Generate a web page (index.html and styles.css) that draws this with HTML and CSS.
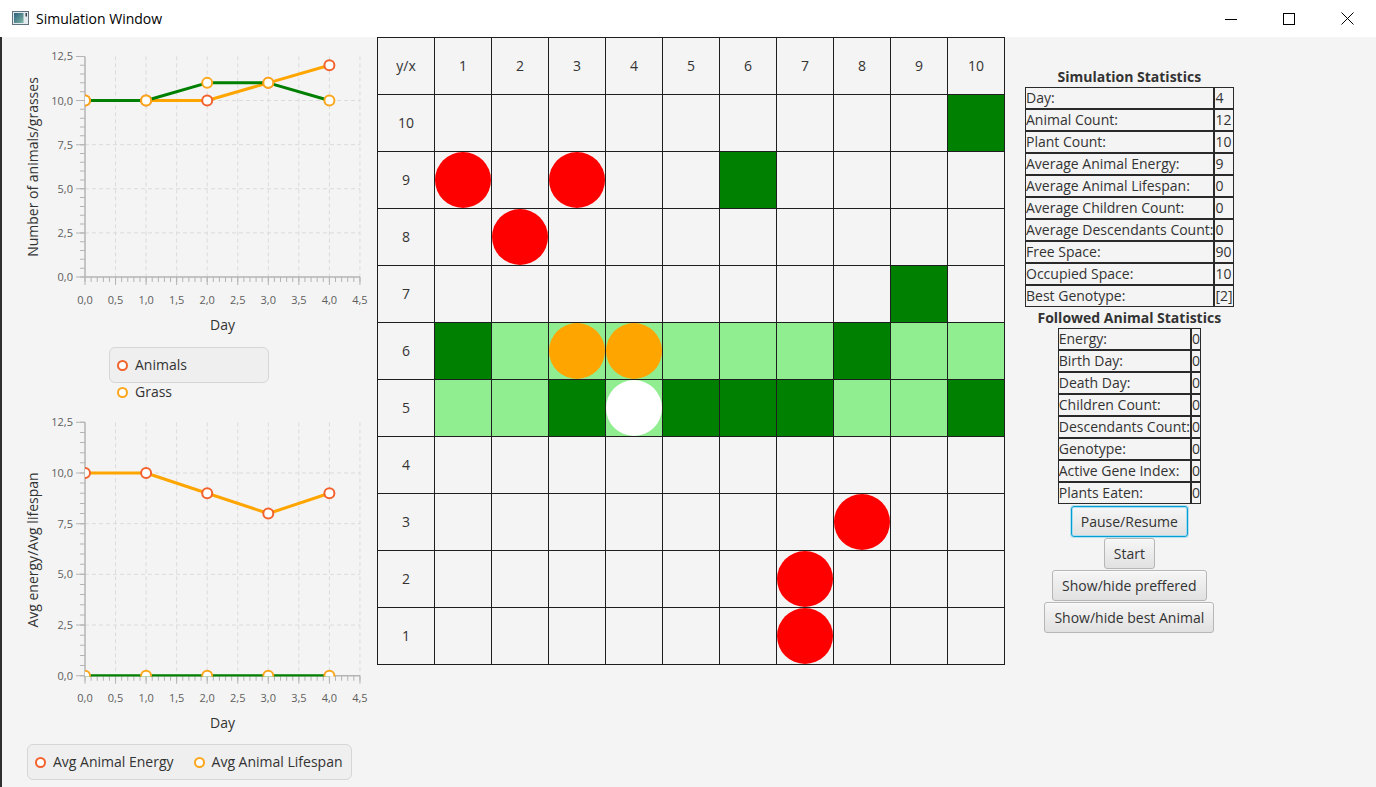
FILE: index.html
```html
<!DOCTYPE html>
<html lang="en">
<head>
<meta charset="utf-8">
<title>Simulation Window</title>
<link rel="stylesheet" href="styles.css">
</head>
<body>
<div class="window">
  <header class="titlebar">
    <svg class="app-icon" width="17" height="15" viewBox="0 0 17 15">
      <defs>
        <linearGradient id="ig" x1="0" x2="1" y1="0" y2="1">
          <stop offset="0" stop-color="#2c5f7c"/>
          <stop offset="1" stop-color="#7fb8a8"/>
        </linearGradient>
      </defs>
      <rect x="0.5" y="0.5" width="16" height="13" fill="#e4eaee" stroke="#60727c"/>
      <rect x="2" y="2" width="9.5" height="10" fill="url(#ig)"/>
      <rect x="13.5" y="2" width="1.5" height="3.5" fill="#34444c"/>
    </svg>
    <span class="title">Simulation Window</span>
    <div class="controls">
      <span class="ctl"><svg width="12" height="12" viewBox="0 0 12 12"><path d="M0 6.5h12" stroke="#000" stroke-width="1"/></svg></span>
      <span class="ctl"><svg width="12" height="12" viewBox="0 0 12 12"><rect x="0.5" y="0.5" width="11" height="11" fill="none" stroke="#000" stroke-width="1"/></svg></span>
      <span class="ctl"><svg width="13" height="13" viewBox="0 0 13 13"><path d="M0.5 0.5L12.5 12.5M12.5 0.5L0.5 12.5" stroke="#000" stroke-width="1"/></svg></span>
    </div>
  </header>

  <main class="content">
    <section class="charts">
      <div class="chart-block">
        <svg class="chart" width="377" height="303" viewBox="0 0 377 303">
          <defs>
            <clipPath id="clipA"><rect x="85" y="19.4" width="275" height="222"/></clipPath>
          </defs>
          <g class="grid-lines">
            <path d="M115.55 19.4V240M146.1 19.4V240M176.65 19.4V240M207.2 19.4V240M237.75 19.4V240M268.3 19.4V240M298.85 19.4V240M329.4 19.4V240M359.95 19.4V240"/>
            <path d="M85 195.88H360M85 151.76H360M85 107.64H360M85 63.52H360"/>
          </g>
          <g class="axis">
            <path class="axis-line" d="M85 19.4V240H360"/>
            <line class="tick" x1="80.5" y1="18.9" x2="80.5" y2="240.5" stroke-width="9" stroke-dasharray="1 43.12"/>
            <line class="tick" x1="82.5" y1="18.9" x2="82.5" y2="240.5" stroke-width="5" stroke-dasharray="1 7.824"/>
            <line class="tick" x1="84.5" y1="244" x2="360.5" y2="244" stroke-width="8" stroke-dasharray="1 29.55"/>
            <line class="tick" x1="84.5" y1="242.5" x2="360.5" y2="242.5" stroke-width="5" stroke-dasharray="1 5.11"/>
          </g>
          <g class="tick-labels ylab">
            <text x="73" y="23.4">12,5</text>
            <text x="73" y="67.5">10,0</text>
            <text x="73" y="111.6">7,5</text>
            <text x="73" y="155.8">5,0</text>
            <text x="73" y="199.9">2,5</text>
            <text x="73" y="244">0,0</text>
          </g>
          <g class="tick-labels xlab">
            <text x="85" y="267">0,0</text>
            <text x="115.55" y="267">0,5</text>
            <text x="146.1" y="267">1,0</text>
            <text x="176.65" y="267">1,5</text>
            <text x="207.2" y="267">2,0</text>
            <text x="237.75" y="267">2,5</text>
            <text x="268.3" y="267">3,0</text>
            <text x="298.85" y="267">3,5</text>
            <text x="329.4" y="267">4,0</text>
            <text x="359.95" y="267">4,5</text>
          </g>
          <text class="axis-title" x="222.5" y="292.5">Day</text>
          <text class="axis-title" transform="translate(38 130) rotate(-90)">Number of animals/grasses</text>
          <g clip-path="url(#clipA)">
            <polyline class="series orange" points="85,63.52 146.1,63.52 207.2,63.52 268.3,45.87 329.4,28.22"/>
            <polyline class="series green" points="85,63.52 146.1,63.52 207.2,45.87 268.3,45.87 329.4,63.52"/>
            <g class="marker m0">
              <circle cx="85" cy="63.52" r="5"/><circle cx="146.1" cy="63.52" r="5"/><circle cx="207.2" cy="63.52" r="5"/><circle cx="268.3" cy="45.87" r="5"/><circle cx="329.4" cy="28.22" r="5"/>
            </g>
            <g class="marker m1">
              <circle cx="85" cy="63.52" r="5"/><circle cx="146.1" cy="63.52" r="5"/><circle cx="207.2" cy="45.87" r="5"/><circle cx="268.3" cy="45.87" r="5"/><circle cx="329.4" cy="63.52" r="5"/>
            </g>
          </g>
        </svg>
        <div class="legend legend-v">
          <div class="li"><span class="sym s0"></span>Animals</div>
          <div class="li"><span class="sym s1"></span>Grass</div>
        </div>
      </div>

      <div class="chart-block second">
        <svg class="chart" width="377" height="339" viewBox="0 0 377 339">
          <defs>
            <clipPath id="clipB"><rect x="85" y="17.3" width="275" height="254.3"/></clipPath>
          </defs>
          <g class="grid-lines">
            <path d="M115.55 17.3V270.7M146.1 17.3V270.7M176.65 17.3V270.7M207.2 17.3V270.7M237.75 17.3V270.7M268.3 17.3V270.7M298.85 17.3V270.7M329.4 17.3V270.7M359.95 17.3V270.7"/>
            <path d="M85 220.02H360M85 169.34H360M85 118.66H360M85 67.98H360"/>
          </g>
          <g class="axis">
            <path class="axis-line" d="M85 17.3V270.7H360"/>
            <line class="tick" x1="80.5" y1="16.8" x2="80.5" y2="271.2" stroke-width="9" stroke-dasharray="1 49.68"/>
            <line class="tick" x1="82.5" y1="16.8" x2="82.5" y2="271.2" stroke-width="5" stroke-dasharray="1 9.136"/>
            <line class="tick" x1="84.5" y1="274.7" x2="360.5" y2="274.7" stroke-width="8" stroke-dasharray="1 29.55"/>
            <line class="tick" x1="84.5" y1="273.2" x2="360.5" y2="273.2" stroke-width="5" stroke-dasharray="1 5.11"/>
          </g>
          <g class="tick-labels ylab">
            <text x="73" y="21.3">12,5</text>
            <text x="73" y="72">10,0</text>
            <text x="73" y="122.7">7,5</text>
            <text x="73" y="173.3">5,0</text>
            <text x="73" y="224">2,5</text>
            <text x="73" y="274.7">0,0</text>
          </g>
          <g class="tick-labels xlab">
            <text x="85" y="297">0,0</text>
            <text x="115.55" y="297">0,5</text>
            <text x="146.1" y="297">1,0</text>
            <text x="176.65" y="297">1,5</text>
            <text x="207.2" y="297">2,0</text>
            <text x="237.75" y="297">2,5</text>
            <text x="268.3" y="297">3,0</text>
            <text x="298.85" y="297">3,5</text>
            <text x="329.4" y="297">4,0</text>
            <text x="359.95" y="297">4,5</text>
          </g>
          <text class="axis-title" x="222.5" y="323">Day</text>
          <text class="axis-title" transform="translate(38 145) rotate(-90)">Avg energy/Avg lifespan</text>
          <g clip-path="url(#clipB)">
            <polyline class="series orange" points="85,67.98 146.1,67.98 207.2,88.25 268.3,108.52 329.4,88.25"/>
            <polyline class="series green" points="85,270.7 146.1,270.7 207.2,270.7 268.3,270.7 329.4,270.7"/>
            <g class="marker m0">
              <circle cx="85" cy="67.98" r="5"/><circle cx="146.1" cy="67.98" r="5"/><circle cx="207.2" cy="88.25" r="5"/><circle cx="268.3" cy="108.52" r="5"/><circle cx="329.4" cy="88.25" r="5"/>
            </g>
            <g class="marker m1">
              <circle cx="85" cy="270.7" r="5"/><circle cx="146.1" cy="270.7" r="5"/><circle cx="207.2" cy="270.7" r="5"/><circle cx="268.3" cy="270.7" r="5"/><circle cx="329.4" cy="270.7" r="5"/>
            </g>
          </g>
        </svg>
        <div class="legend legend-h">
          <div class="li"><span class="sym s0"></span>Avg Animal Energy</div>
          <div class="li"><span class="sym s1"></span>Avg Animal Lifespan</div>
        </div>
      </div>
    </section>

    <section class="board">
      <div class="cell">y/x</div><div class="cell">1</div><div class="cell">2</div><div class="cell">3</div><div class="cell">4</div><div class="cell">5</div><div class="cell">6</div><div class="cell">7</div><div class="cell">8</div><div class="cell">9</div><div class="cell">10</div>

      <div class="cell">10</div><div class="cell"></div><div class="cell"></div><div class="cell"></div><div class="cell"></div><div class="cell"></div><div class="cell"></div><div class="cell"></div><div class="cell"></div><div class="cell"></div><div class="cell dg"></div>

      <div class="cell">9</div><div class="cell"><span class="dot red"></span></div><div class="cell"></div><div class="cell"><span class="dot red"></span></div><div class="cell"></div><div class="cell"></div><div class="cell dg"></div><div class="cell"></div><div class="cell"></div><div class="cell"></div><div class="cell"></div>

      <div class="cell">8</div><div class="cell"></div><div class="cell"><span class="dot red"></span></div><div class="cell"></div><div class="cell"></div><div class="cell"></div><div class="cell"></div><div class="cell"></div><div class="cell"></div><div class="cell"></div><div class="cell"></div>

      <div class="cell">7</div><div class="cell"></div><div class="cell"></div><div class="cell"></div><div class="cell"></div><div class="cell"></div><div class="cell"></div><div class="cell"></div><div class="cell"></div><div class="cell dg"></div><div class="cell"></div>

      <div class="cell">6</div><div class="cell dg"></div><div class="cell lg"></div><div class="cell lg"><span class="dot orange"></span></div><div class="cell lg"><span class="dot orange"></span></div><div class="cell lg"></div><div class="cell lg"></div><div class="cell lg"></div><div class="cell dg"></div><div class="cell lg"></div><div class="cell lg"></div>

      <div class="cell">5</div><div class="cell lg"></div><div class="cell lg"></div><div class="cell dg"></div><div class="cell lg"><span class="dot white"></span></div><div class="cell dg"></div><div class="cell dg"></div><div class="cell dg"></div><div class="cell lg"></div><div class="cell lg"></div><div class="cell dg"></div>

      <div class="cell">4</div><div class="cell"></div><div class="cell"></div><div class="cell"></div><div class="cell"></div><div class="cell"></div><div class="cell"></div><div class="cell"></div><div class="cell"></div><div class="cell"></div><div class="cell"></div>

      <div class="cell">3</div><div class="cell"></div><div class="cell"></div><div class="cell"></div><div class="cell"></div><div class="cell"></div><div class="cell"></div><div class="cell"></div><div class="cell"><span class="dot red"></span></div><div class="cell"></div><div class="cell"></div>

      <div class="cell">2</div><div class="cell"></div><div class="cell"></div><div class="cell"></div><div class="cell"></div><div class="cell"></div><div class="cell"></div><div class="cell"><span class="dot red"></span></div><div class="cell"></div><div class="cell"></div><div class="cell"></div>

      <div class="cell">1</div><div class="cell"></div><div class="cell"></div><div class="cell"></div><div class="cell"></div><div class="cell"></div><div class="cell"></div><div class="cell"><span class="dot red"></span></div><div class="cell"></div><div class="cell"></div><div class="cell"></div>
    </section>

    <aside class="panel">
      <h2 class="panel-title">Simulation Statistics</h2>
      <div class="stats">
        <span>Day:</span><span>4</span>
        <span>Animal Count:</span><span>12</span>
        <span>Plant Count:</span><span>10</span>
        <span>Average Animal Energy:</span><span>9</span>
        <span>Average Animal Lifespan:</span><span>0</span>
        <span>Average Children Count:</span><span>0</span>
        <span>Average Descendants Count:</span><span>0</span>
        <span>Free Space:</span><span>90</span>
        <span>Occupied Space:</span><span>10</span>
        <span>Best Genotype:</span><span>[2]</span>
      </div>
      <h2 class="panel-title sub">Followed Animal Statistics</h2>
      <div class="stats">
        <span>Energy:</span><span>0</span>
        <span>Birth Day:</span><span>0</span>
        <span>Death Day:</span><span>0</span>
        <span>Children Count:</span><span>0</span>
        <span>Descendants Count:</span><span>0</span>
        <span>Genotype:</span><span>0</span>
        <span>Active Gene Index:</span><span>0</span>
        <span>Plants Eaten:</span><span>0</span>
      </div>
      <div class="buttons">
        <button class="btn focused" type="button">Pause/Resume</button>
        <button class="btn" type="button">Start</button>
        <button class="btn" type="button">Show/hide preffered</button>
        <button class="btn" type="button">Show/hide best Animal</button>
      </div>
    </aside>
  </main>
</div>
</body>
</html>
```

FILE: styles.css
```css
html, body {
  margin: 0;
  padding: 0;
  height: 100%;
}

body {
  background: #f4f4f4;
  font-family: "Open Sans", "Noto Sans", sans-serif;
  font-size: 14px;
  color: #333;
  overflow: hidden;
}

.window {
  width: 1376px;
  height: 787px;
  display: flex;
  flex-direction: column;
}

/* title bar */
.titlebar {
  height: 37px;
  flex: none;
  background: #ffffff;
  display: flex;
  align-items: center;
}

.app-icon {
  margin-left: 12px;
  display: block;
}

.title {
  margin-left: 7px;
  color: #000;
  font-size: 14px;
  line-height: 20px;
}

.controls {
  margin-left: auto;
  display: flex;
  height: 37px;
}

.ctl {
  width: 58px;
  display: flex;
  align-items: center;
  justify-content: center;
}

.ctl svg {
  display: block;
}

/* main content */
.content {
  flex: 1;
  display: flex;
  align-items: flex-start;
  box-shadow: inset 2px 0 0 #2f2f2f;
}

.charts {
  width: 377px;
  flex: none;
}

.chart {
  display: block;
}

.chart-block.second {
  margin-top: 22px;
}

.grid-lines path {
  fill: none;
  stroke: #dbdbdb;
  stroke-width: 1;
  stroke-dasharray: 4 3;
}

.axis-line {
  fill: none;
  stroke: #b4b4b4;
  stroke-width: 1.5;
}

.tick {
  stroke: #b4b4b4;
}

.tick-labels text {
  font-family: "Open Sans", "Noto Sans", sans-serif;
  font-size: 11px;
  fill: #5e5e5e;
}

.ylab text {
  text-anchor: end;
}

.xlab text {
  text-anchor: middle;
}

.axis-title {
  font-family: "Open Sans", "Noto Sans", sans-serif;
  font-size: 14px;
  fill: #333;
  text-anchor: middle;
}

.series {
  fill: none;
  stroke-width: 3;
  stroke-linejoin: round;
}

.series.orange { stroke: #ffa500; }
.series.green { stroke: #008000; }

.marker circle {
  fill: #ffffff;
  stroke-width: 2;
}

.marker.m0 circle { stroke: #f3622d; }
.marker.m1 circle { stroke: #fba71b; }

/* legends */
.legend {
  box-sizing: border-box;
  height: 36px;
  border: 1px solid #d6d6d6;
  border-radius: 6px;
  background: #efefef;
  display: flex;
}

.legend-v {
  width: 160px;
  margin: 7px 0 0 109px;
  flex-direction: column;
  padding: 7px 0 0 7px;
  gap: 7px;
}

.legend-h {
  width: 325px;
  margin-left: 27px;
  align-items: center;
  padding-left: 7px;
  gap: 20px;
}

.li {
  display: flex;
  align-items: center;
  gap: 7px;
  line-height: 20px;
  white-space: nowrap;
  color: #333;
}

.sym {
  width: 11px;
  height: 11px;
  box-sizing: border-box;
  border-radius: 50%;
  background: #ffffff;
  border: 2.5px solid #f3622d;
  flex: none;
}

.sym.s1 {
  border-color: #fba71b;
}

/* board */
.board {
  flex: none;
  display: grid;
  grid-template-columns: repeat(11, 57px);
  grid-auto-rows: 57px;
  border-left: 1px solid #1e1e1e;
  border-top: 1px solid #1e1e1e;
}

.cell {
  box-sizing: border-box;
  border-right: 1px solid #1e1e1e;
  border-bottom: 1px solid #1e1e1e;
  display: flex;
  align-items: center;
  justify-content: center;
  color: #333;
  font-size: 14px;
  padding-bottom: 2px;
}

.cell.dg { background: #008000; }
.cell.lg { background: #90ee90; }

.dot {
  width: 56px;
  height: 56px;
  border-radius: 50%;
  flex: none;
  margin-bottom: -2px;
}

.dot.red { background: #ff0000; }
.dot.orange { background: #ffa500; }
.dot.white { background: #ffffff; }

/* right panel */
.panel {
  margin-left: 20px;
  padding-top: 29px;
  display: flex;
  flex-direction: column;
  align-items: center;
}

.panel-title {
  margin: 0;
  font-size: 14px;
  font-weight: 700;
  line-height: 21px;
  color: #333;
  white-space: nowrap;
}

.stats {
  display: grid;
  grid-template-columns: max-content max-content;
}

.stats span {
  box-sizing: border-box;
  height: 22px;
  line-height: 20px;
  border: 1px solid #2a2a2a;
  white-space: nowrap;
  color: #333;
}

.buttons {
  display: flex;
  flex-direction: column;
  align-items: center;
  gap: 1px;
  margin-top: 2px;
}

.btn {
  font: inherit;
  font-size: 14px;
  color: #333;
  height: 31px;
  padding: 0 9px;
  border: 1px solid #b6b6b6;
  border-radius: 3px;
  background: linear-gradient(#f6f6f6, #e1e1e1);
  box-shadow: inset 0 1px 0 #fbfbfb;
  white-space: nowrap;
}

.btn.focused {
  border-color: #039ed3;
  box-shadow: inset 0 0 0 1px #a8dcf0, 0 0 0 1px rgba(3, 158, 211, 0.25);
}
```
